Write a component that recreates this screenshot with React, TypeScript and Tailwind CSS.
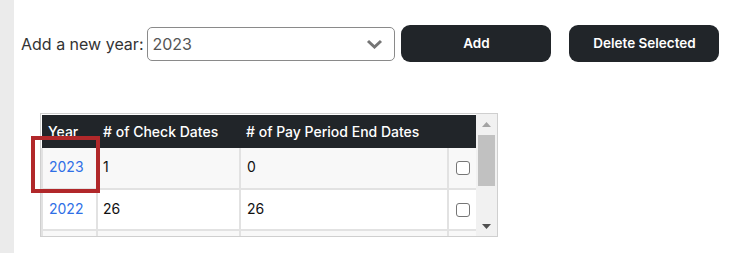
import React from 'react';

const rows = [
  { year: '2023', checks: '1', payEnds: '0' },
  { year: '2022', checks: '26', payEnds: '26' },
];

const App: React.FC = () => {
  return (
    <div
      className="flex h-[253px] w-[737px] bg-white text-[#222]"
      style={{ fontFamily: 'Inter, "Noto Sans", sans-serif' }}
    >
      <div className="w-[14px] shrink-0 bg-[#ebebeb]" />

      <div className="flex-1">
        {/* Add year row */}
        <div className="mt-[25px] flex items-center pl-[7px]">
          <label className="mr-[4px] text-[16px] text-[#333]">Add a new year:</label>
          <div className="flex h-[34px] w-[248px] items-center justify-between rounded-[5px] border border-[#8a8a8a] pl-[4px] pr-[11px] text-[16px] text-[#555]">
            <span>2023</span>
            <svg width="17" height="10" viewBox="0 0 17 10">
              <path d="M2 2 L8.5 8 L15 2" fill="none" stroke="#757575" strokeWidth="3" />
            </svg>
          </div>
          <button className="ml-[6px] h-[37px] w-[150px] rounded-[9px] bg-[#212529] text-[13.5px] font-semibold text-white">
            Add
          </button>
          <button className="ml-[18px] h-[37px] w-[150px] rounded-[9px] bg-[#212529] text-[13.5px] font-semibold text-white">
            Delete Selected
          </button>
        </div>

        {/* Table */}
        <div className="relative ml-[26px] mt-[51px] flex h-[124px] w-[458px] border border-[#cfcfcf] bg-white">
          <div className="h-full w-[436px] overflow-hidden pt-[1px]">
            <table className="w-full border-collapse text-[14px]">
              <thead>
                <tr className="h-[33px] bg-[#212529] text-left text-white">
                  <th className="w-[55px] pl-[6px] font-medium">Year</th>
                  <th className="w-[143px] pl-[6px] font-medium">
                    # of Check Dates
                  </th>
                  <th className="w-[208px] pl-[6px] font-medium">
                    # of Pay Period End Dates
                  </th>
                  <th className="font-medium" />
                </tr>
              </thead>
              <tbody>
                {rows.map((row, i) => (
                  <tr
                    key={row.year}
                    className={`h-[41px] border-b-2 border-[#e2e2e2] ${i % 2 === 0 ? 'bg-[#f8f8f8]' : 'bg-white'}`}
                  >
                    <td className="border-x-2 border-[#e2e2e2] pb-[3px] pl-[6px] text-[#2f6fe6]">{row.year}</td>
                    <td className="border-r-2 border-[#e2e2e2] pb-[3px] pl-[5px] text-[#111]">{row.checks}</td>
                    <td className="border-r-2 border-[#e2e2e2] pb-[3px] pl-[6px] text-[#111]">{row.payEnds}</td>
                    <td className="pl-[7px]">
                      <div className="h-[14px] w-[14px] rounded-[3px] border border-[#767676] bg-white" />
                    </td>
                  </tr>
                ))}
                <tr className="h-[41px] bg-[#f8f8f8]">
                  <td className="border-x-2 border-[#e2e2e2]" />
                  <td className="border-r-2 border-[#e2e2e2]" />
                  <td className="border-r-2 border-[#e2e2e2]" />
                  <td />
                </tr>
              </tbody>
            </table>
          </div>

          {/* scrollbar */}
          <div className="flex h-full w-[21px] flex-col items-center bg-[#f1f1f1]">
            <div className="flex h-[21px] w-full items-center justify-center">
              <svg width="9" height="5" viewBox="0 0 9 5">
                <path d="M0 5 L4.5 0 L9 5 Z" fill="#a3a3a3" />
              </svg>
            </div>
            <div className="h-[51px] w-[17px] bg-[#c1c1c1]" />
            <div className="flex-1" />
            <div className="flex h-[20px] w-full items-center justify-center">
              <svg width="9" height="5" viewBox="0 0 9 5">
                <path d="M0 0 L9 0 L4.5 5 Z" fill="#505050" />
              </svg>
            </div>
          </div>

          {/* highlight around the first year */}
          <div className="absolute left-[-10px] top-[22px] h-[57px] w-[69px] border-[4px] border-[#b1282a]" />
        </div>
      </div>
    </div>
  );
};

export default App;
